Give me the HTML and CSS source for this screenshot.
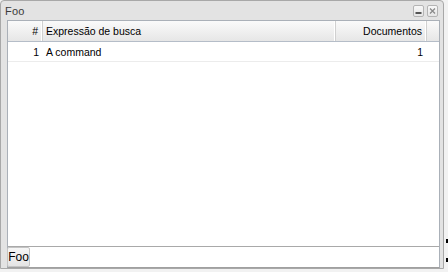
FILE: index.html
```html
<!DOCTYPE html>
<html>
<head>
<meta charset="utf-8">
<link rel="stylesheet" href="styles.css">
</head>
<body>
<div class="desk">
  <div class="window">
    <div class="titlebar">
      <span class="title">Foo</span>
      <div class="tools">
        <span class="tool"><svg width="11" height="12" viewBox="0 0 11 12"><rect x="2.5" y="7" width="6" height="2" fill="#555"/></svg></span>
        <span class="tool"><svg width="11" height="12" viewBox="0 0 11 12"><path d="M3 3.5 L8 8.5 M8 3.5 L3 8.5" stroke="#8a8a8a" stroke-width="1.3"/></svg></span>
      </div>
    </div>
    <div class="panel">
      <div class="grid">
        <div class="hrow">
          <div class="cell c-num hcell">#</div>
          <div class="cell c-expr hcell">Expressão de busca</div>
          <div class="cell c-docs hcell">Documentos</div>
          <div class="cell c-fill hcell"></div>
        </div>
        <div class="row">
          <div class="cell c-num">1</div>
          <div class="cell c-expr">A command</div>
          <div class="cell c-docs">1</div>
        </div>
      </div>
      <div class="footer">
        <span class="fbtn">Foo</span>
      </div>
    </div>
  </div>
  <div class="edge">
    <span class="mark m1"></span>
    <span class="mark m2"></span>
  </div>
</div>
</body>
</html>
```
FILE: styles.css
```css
html, body {
  margin: 0;
  padding: 0;
}
body {
  background: #f2f2f2;
  font-family: "Liberation Sans", Arial, sans-serif;
  font-size: 11px;
  color: #000;
}
.desk {
  display: flex;
  width: 448px;
  height: 272px;
}
.window {
  width: 444px;
  height: 269px;
  border: 1px solid #a8a8a8;
  border-radius: 4px 4px 0 0;
  background: #e3e3e3;
  display: flex;
  flex-direction: column;
  padding: 0 3px 0 6px;
  box-sizing: border-box;
  flex: none;
}
.titlebar {
  height: 19px;
  display: flex;
  align-items: center;
  justify-content: space-between;
  flex: none;
}
.title {
  color: #3a3a3a;
  margin-left: -2px;
  margin-top: 1px;
  letter-spacing: 0.2px;
}
.tools {
  display: flex;
  gap: 3px;
  margin-right: 2px;
  margin-top: 1px;
}
.tool {
  width: 11px;
  height: 12px;
  border: 1px solid #b4b4b4;
  border-radius: 2px;
  background: linear-gradient(#f8f8f8, #e6e6e6);
  box-sizing: border-box;
  display: flex;
  align-items: center;
  justify-content: center;
  overflow: hidden;
}
.tool svg {
  display: block;
  flex: none;
}
.panel {
  flex: 1;
  display: flex;
  flex-direction: column;
  border: 1px solid #aab0b8;
  border-bottom-color: #a0a0a0;
  background: #fff;
}
.grid {
  flex: 1;
  background: #fff;
  border-bottom: 1px solid #a9a9a9;
  font-size: 10.5px;
}
.hrow {
  display: flex;
  height: 21px;
  border-bottom: 1px solid #b5bdc8;
  box-sizing: border-box;
  background: linear-gradient(#fafafa, #e6e6e6);
}
.row {
  display: flex;
  height: 20px;
  border-bottom: 1px solid #ececec;
  box-sizing: border-box;
}
.cell {
  display: flex;
  align-items: center;
  box-sizing: border-box;
  white-space: nowrap;
}
.hcell {
  border-right: 1px solid #d0d0d0;
  box-shadow: inset -1px 0 0 #ffffff;
}
.c-num {
  width: 35px;
  justify-content: flex-end;
  padding-right: 4px;
}
.c-expr {
  width: 293px;
  padding-left: 3px;
}
.c-docs {
  width: 91px;
  justify-content: flex-end;
  padding-right: 4px;
}
.c-fill {
  flex: 1;
  border-right: none;
  box-shadow: none;
}
.footer {
  height: 20px;
  display: flex;
  align-items: stretch;
  background: #fff;
  flex: none;
}
.fbtn {
  width: 23px;
  border: 1px solid #c4c4c4;
  border-radius: 2px;
  background: linear-gradient(#f6f6f6, #e4e4e4);
  box-sizing: border-box;
  display: flex;
  align-items: center;
  justify-content: center;
  font-size: 12px;
  margin-left: -1px;
}
.edge {
  flex: 1;
  position: relative;
}
.mark {
  position: absolute;
  left: 2px;
  width: 2px;
  height: 4px;
  background: #000;
}
.m1 { top: 239px; }
.m2 { top: 258px; }
```
